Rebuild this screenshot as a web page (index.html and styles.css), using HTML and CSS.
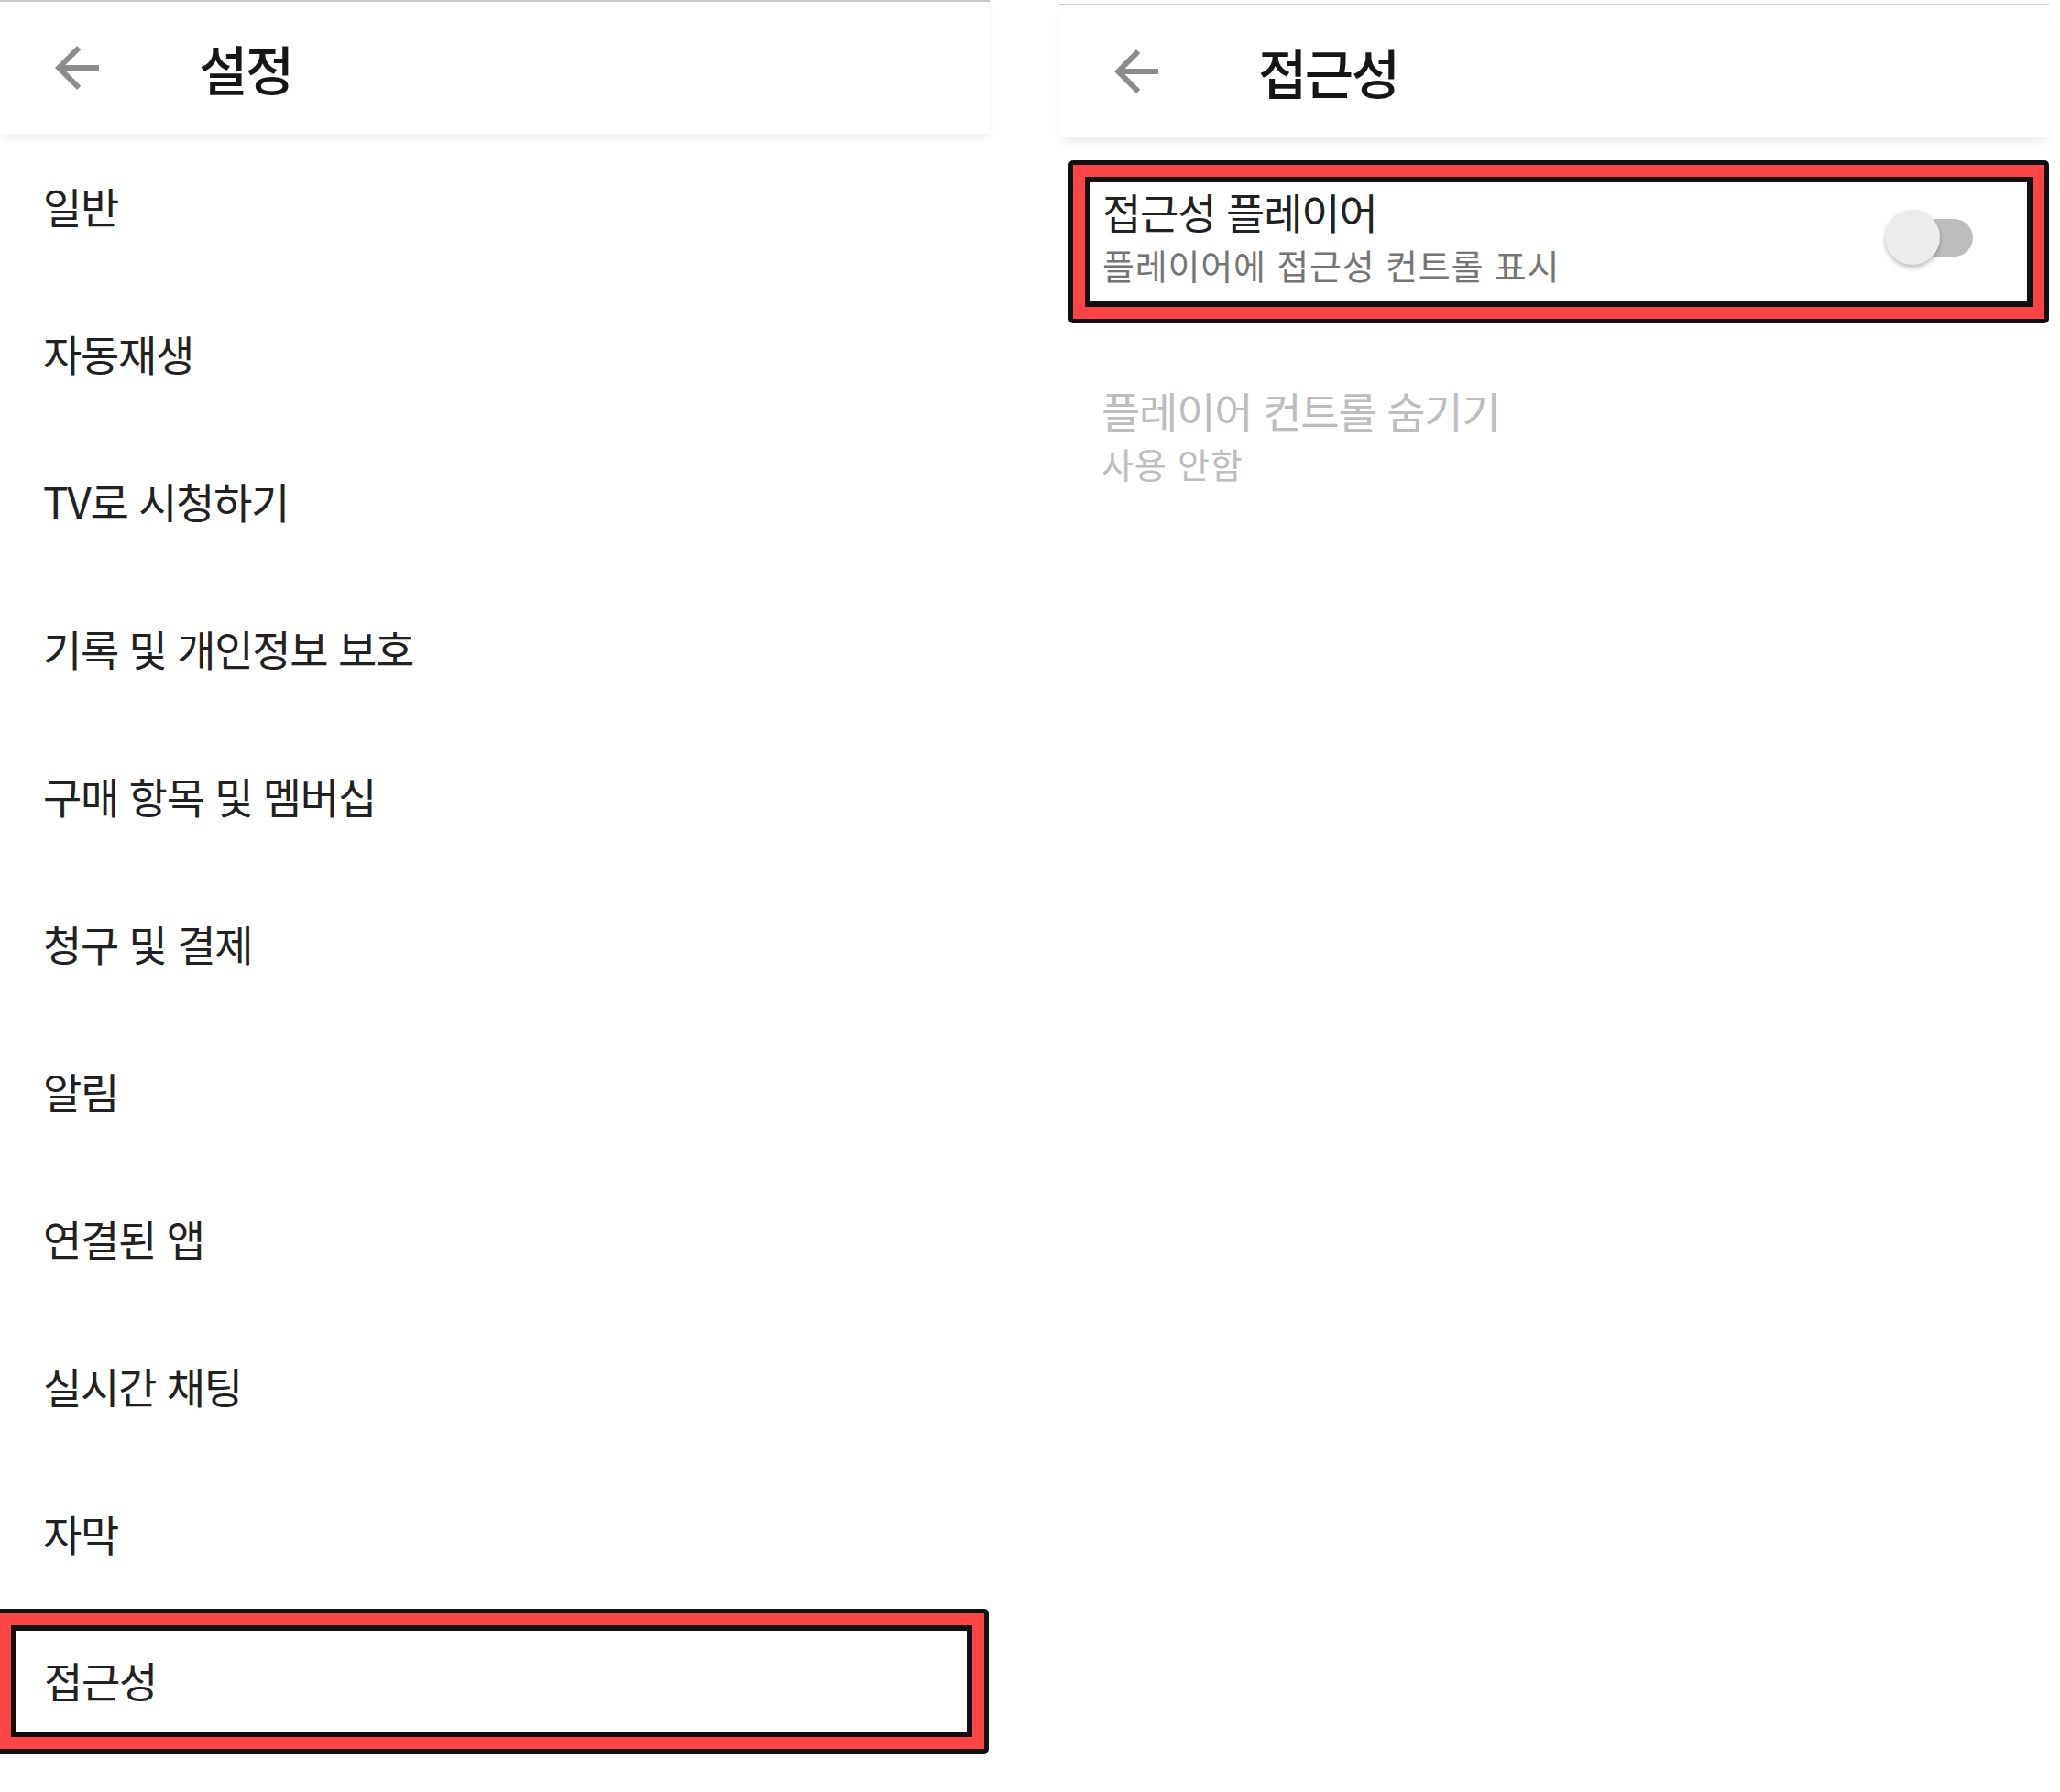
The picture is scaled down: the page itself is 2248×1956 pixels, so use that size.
FILE: index.html
```html
<!DOCTYPE html>
<html lang="ko">

<head>
  <meta charset="UTF-8">
  <title>설정 / 접근성</title>
  <link rel="stylesheet" href="styles.css">
</head>

<body>

  <div class="screen">
    <div class="topbar">
      <svg class="back" viewBox="0 0 24 24"><path d="M20 11H7.83l5.59-5.59L12 4l-8 8 8 8 1.41-1.41L7.83 13H20v-2z"/></svg>
      <h1>설정</h1>
    </div>
    <ul class="menu">
      <li>일반</li>
      <li>자동재생</li>
      <li>TV로 시청하기</li>
      <li>기록 및 개인정보 보호</li>
      <li>구매 항목 및 멤버십</li>
      <li>청구 및 결제</li>
      <li>알림</li>
      <li>연결된 앱</li>
      <li>실시간 채팅</li>
      <li>자막</li>
      <li class="mark mark-left"><div class="mark-inner">접근성</div></li>
    </ul>
  </div>

  <div class="screen screen-right">
    <div class="topbar">
      <svg class="back" viewBox="0 0 24 24"><path d="M20 11H7.83l5.59-5.59L12 4l-8 8 8 8 1.41-1.41L7.83 13H20v-2z"/></svg>
      <h1>접근성</h1>
    </div>
    <div class="mark mark-right">
      <div class="mark-inner pref">
        <div class="pref-text">
          <div class="pref-title">접근성 플레이어</div>
          <div class="pref-sub">플레이어에 접근성 컨트롤 표시</div>
        </div>
        <div class="toggle"><span class="thumb"></span></div>
      </div>
    </div>
    <div class="pref-off">
      <div class="pref-title">플레이어 컨트롤 숨기기</div>
      <div class="pref-sub">사용 안함</div>
    </div>
  </div>

</body>
</html>
```

FILE: styles.css
```css
body { margin: 0; background: #fff; font-family: "Noto Sans CJK KR", "Noto Sans", sans-serif; color: #212121; display: flex; overflow: hidden; }
.screen { width: 1080px; flex: none; }
.screen-right { margin-left: 76px; padding-top: 4px; }

.topbar { height: 144px; border-top: 2px solid #cbcbcb; display: flex; align-items: center; box-shadow: 0 6px 10px -3px rgba(0,0,0,0.09); position: relative; }
.back { width: 72px; height: 72px; margin-left: 48px; fill: #8c8c8c; }
h1 { margin: 0 0 0 97px; font-size: 58px; font-weight: 500; letter-spacing: -2.5px; color: #161616; }

.menu { list-style: none; margin: 0; padding: 0; }
.menu li { height: 161px; display: flex; align-items: center; padding: 0 0 5px 47px; font-size: 46px; letter-spacing: -1.3px; box-sizing: border-box; }

/* red highlight frame */
.mark { border: 5px solid #111; border-radius: 5px; background: #fe4545; padding: 13px; box-sizing: border-box; }
.mark-inner { border: 6px solid #111; background: #fff; }
.menu li.mark-left { width: 1085px; height: 158px; margin-left: -6px; padding: 13px; display: block; }
.mark-left .mark-inner { height: 110px; display: flex; align-items: center; padding: 0 0 4px 30px; box-sizing: border-box; height: 122px; }

.mark-right { margin: 25px 0 0 10px; width: 1070px; }
.pref { display: flex; padding: 3px 0 0 13px; box-sizing: border-box; height: 142px; }
.pref-text { flex: 1; }
.pref-title { font-size: 46px; line-height: 56px; letter-spacing: -1.2px; }
.pref-sub { font-size: 38px; line-height: 62px; letter-spacing: 0.8px; color: #757575; }

.toggle { width: 96px; height: 60px; margin: 27px 59px 0 0; position: relative; }
.toggle::before { content: ""; position: absolute; right: 0; top: 10px; width: 74px; height: 41px; border-radius: 21px; background: #bdbdbd; }
.thumb { position: absolute; left: 0; top: 0; width: 60px; height: 60px; border-radius: 50%; background: #ececec; box-shadow: 0 3px 5px rgba(0,0,0,0.25); }

.pref-off { margin-top: 66px; padding-left: 46px; }
.pref-off .pref-title, .pref-off .pref-sub { color: #bdbdbd; }
```
